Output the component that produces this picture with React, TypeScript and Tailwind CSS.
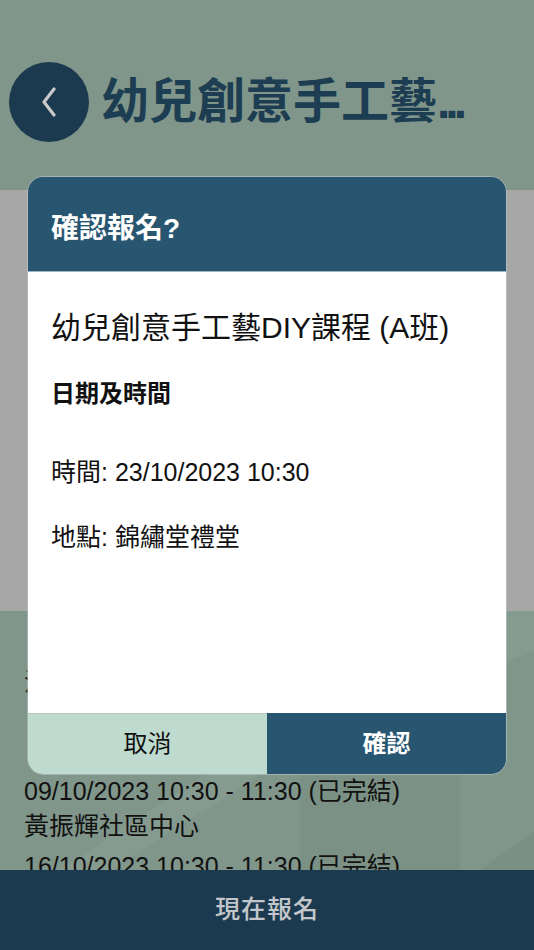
import React from "react";

const FONT = { fontFamily: '"Liberation Sans", "Noto Sans CJK TC", sans-serif' };

function Entry({ date, place }: { date: string; place: string }) {
  return (
    <div className="flex flex-col">
      <div className="h-[35px] leading-[35px]">{date}</div>
      <div className="h-[35px] leading-[35px]">{place}</div>
    </div>
  );
}

export default function App() {
  return (
    <div className="relative w-[534px] h-[950px] overflow-hidden bg-[#80968a] flex flex-col" style={FONT}>
      {/* Header */}
      <header className="h-[190px] shrink-0 flex items-center pt-[14px] pl-[9px] gap-[12px]">
        <button className="w-[80px] h-[80px] rounded-full bg-[#1c3a4f] flex items-center justify-center shrink-0">
          <svg width="18" height="30" viewBox="0 0 18 30" fill="none">
            <path d="M14 2 L4 15 L14 28" stroke="#c9c9c9" strokeWidth="3.2" strokeLinecap="round" strokeLinejoin="round" />
          </svg>
        </button>
        <h1 className="text-[48px] font-bold text-[#1d3d52] leading-none whitespace-nowrap">
          幼兒創意手工藝<span className="tracking-[-5px]">...</span>
        </h1>
      </header>

      {/* Image placeholder */}
      <div className="h-[421px] shrink-0 bg-[#a7a7a7]" />

      {/* Content */}
      <div className="relative flex-1 overflow-hidden">
        <svg className="absolute inset-0" width="534" height="259" viewBox="0 0 534 259">
          <polygon points="110,259 330,120 534,40 534,0 470,0 300,100 60,259" fill="#ffffff" opacity="0.05" />
          <polygon points="300,150 420,110 460,140 460,259 300,259" fill="#000000" opacity="0.03" />
          <polygon points="480,259 534,220 534,259" fill="#000000" opacity="0.04" />
        </svg>
        <div className="relative pl-[24px] pt-[54px] text-[25px] text-[#111] flex flex-col">
          <div className="h-[34px] leading-[34px]">活動日期及時間</div>
          <div className="mt-[75px] flex flex-col gap-[5px]">
            <Entry date="09/10/2023 10:30 - 11:30 (已完結)" place="黃振輝社區中心" />
            <Entry date="16/10/2023 10:30 - 11:30 (已完結)" place="黃振輝社區中心" />
          </div>
        </div>
      </div>

      {/* Footer */}
      <footer className="h-[80px] shrink-0 bg-[#1c3a4f] flex items-center justify-center">
        <span className="text-[25px] font-medium text-[#c3c7cb] tracking-[1px]">現在報名</span>
      </footer>

      {/* Modal */}
      <div className="absolute left-[27px] top-[176px] w-[480px] rounded-[16px] overflow-hidden flex flex-col border border-[#b9c6cc]/60">
        <div className="h-[95px] bg-[#285670] flex items-center pt-[9px] pl-[23px] border-b border-[#9db4c2]">
          <span className="text-[28px] font-bold text-white">確認報名?</span>
        </div>
        <div className="h-[441px] bg-white pl-[23px] text-[#111] flex flex-col">
          <div className="mt-[36px] h-[40px] leading-[40px] text-[30px]">幼兒創意手工藝DIY課程 (A班)</div>
          <div className="mt-[29px] h-[34px] leading-[34px] text-[24px] font-bold">日期及時間</div>
          <div className="mt-[44px] h-[34px] leading-[34px] text-[25px]">時間: 23/10/2023 10:30</div>
          <div className="mt-[31px] h-[34px] leading-[34px] text-[25px]">地點: 錦繡堂禮堂</div>
        </div>
        <div className="h-[61px] grid grid-cols-2">
          <button className="bg-[#bfdbcf] text-[24px] font-normal text-[#111] border-t border-[#b5c9bf]">取消</button>
          <button className="bg-[#285670] text-[24px] font-bold text-white">確認</button>
        </div>
      </div>
    </div>
  );
}
